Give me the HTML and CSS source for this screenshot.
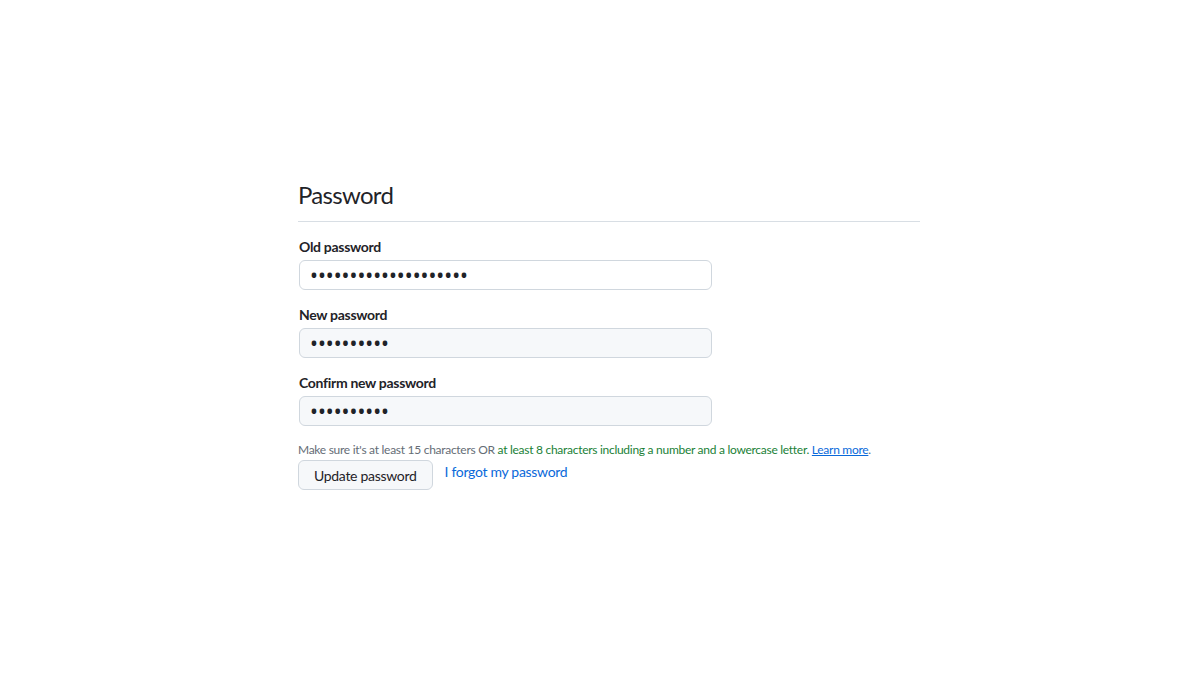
FILE: index.html
```html
<!DOCTYPE html>
<html>
<head>
<meta charset="utf-8">
<link rel="stylesheet" href="styles.css">
</head>
<body>
<div class="page">
  <div class="subhead">
    <h2 class="subhead-title">Password</h2>
  </div>
  <form class="form">
    <div class="form-group">
      <label class="label" for="old">Old password</label>
      <input class="input input-white" id="old" type="password" value="aaaaaaaaaaaaaaaaaaaa">
    </div>
    <div class="form-group">
      <label class="label" for="new">New password</label>
      <input class="input" id="new" type="password" value="aaaaaaaaaa">
    </div>
    <div class="form-group">
      <label class="label" for="confirm">Confirm new password</label>
      <input class="input" id="confirm" type="password" value="aaaaaaaaaa">
    </div>
    <p class="note">Make sure it's at least 15 characters OR <span class="ok">at least 8 characters including a number and a lowercase letter.</span> <a class="learn" href="#">Learn more</a>.</p>
    <div class="actions">
      <button class="btn" type="button">Update password</button>
      <a class="forgot" href="#">I forgot my password</a>
    </div>
  </form>
</div>
</body>
</html>
```

FILE: styles.css
```css
html, body {
  margin: 0;
  padding: 0;
  background: #ffffff;
}
body {
  font-family: "Lato", "Noto Sans", sans-serif;
  color: #1f2328;
}
.page {
  width: 622px;
  margin-left: 298px;
  padding-top: 177px;
}
.subhead {
  border-bottom: 1px solid #d8dee4;
  padding-bottom: 8px;
  margin-bottom: 15px;
}
.subhead-title {
  margin: 0;
  font-size: 24px;
  font-weight: 400;
  line-height: 36px;
  letter-spacing: -0.7px;
}
.form-group {
  margin-bottom: 15px;
}
.label {
  display: block;
  font-size: 14px;
  font-weight: 700;
  line-height: 20px;
  margin-bottom: 3px;
  padding-left: 1px;
  letter-spacing: -0.3px;
}
.input {
  box-sizing: border-box;
  width: 413px;
  height: 30px;
  padding: 0 10px;
  border: 1px solid #d0d7de;
  border-radius: 6px;
  background: #f6f8fa;
  font-family: "Noto Sans", sans-serif;
  font-size: 21px;
  color: #1f2328;
  margin-left: 1px;
}
.input-white {
  background: #ffffff;
}
.note {
  margin: 0;
  font-size: 12px;
  line-height: 18px;
  color: #656d76;
  letter-spacing: -0.28px;
}
.ok {
  color: #1a7f37;
}
.learn {
  color: #0969da;
  text-decoration: underline;
}
.actions {
  display: flex;
  align-items: flex-start;
  gap: 12px;
  margin-top: 1px;
}
.btn {
  box-sizing: border-box;
  height: 30px;
  padding: 0 15px;
  border: 1px solid #d0d7de;
  border-radius: 6px;
  background: #f6f8fa;
  font-family: "Lato", sans-serif;
  font-size: 14px;
  letter-spacing: -0.3px;
  color: #1f2328;
}
.forgot {
  font-size: 14px;
  line-height: 24px;
  letter-spacing: -0.3px;
  color: #0969da;
  text-decoration: none;
}
```
